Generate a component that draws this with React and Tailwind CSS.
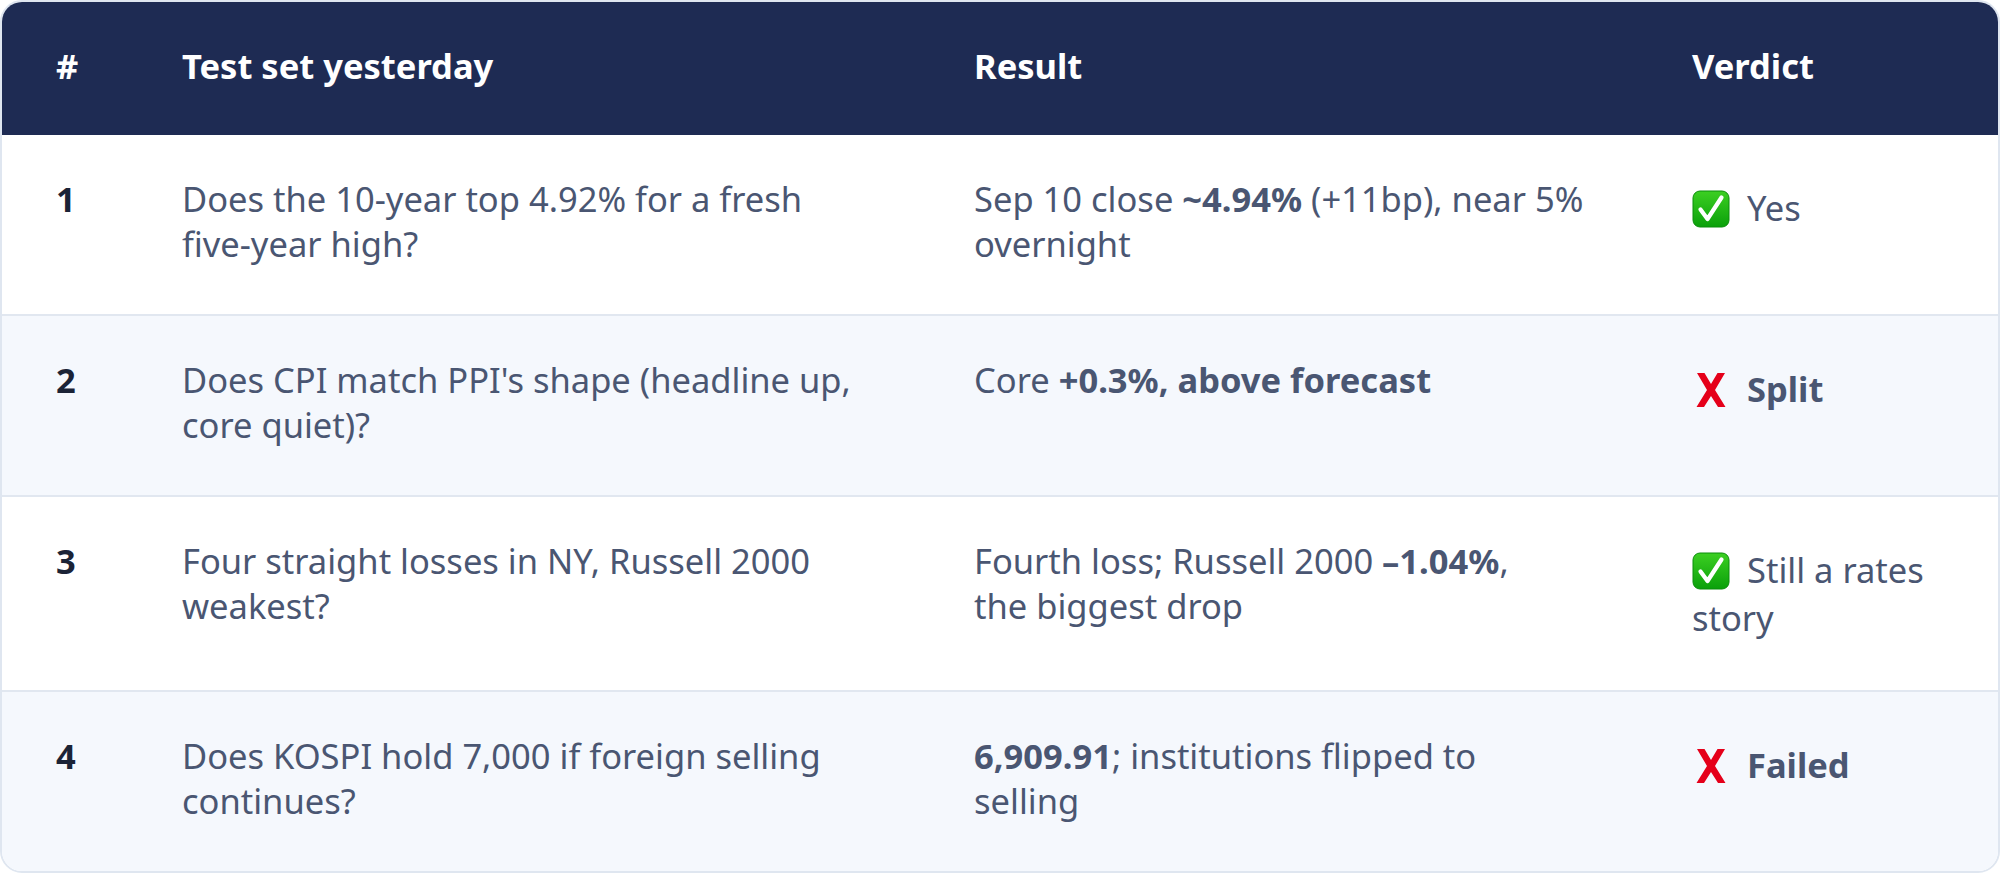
import React from "react";

function CheckMark() {
  return (
    <svg className="inline-block align-[-7px] mr-[17px]" width="38" height="38" viewBox="0 0 38 38">
      <defs>
        <linearGradient id="chk" x1="0" y1="0" x2="0" y2="1">
          <stop offset="0" stopColor="#3ccf22" />
          <stop offset="1" stopColor="#0aa00a" />
        </linearGradient>
      </defs>
      <rect x="1" y="1" width="36" height="36" rx="7" fill="url(#chk)" stroke="#0b8e0b" strokeWidth="1" />
      <path d="M8.5 19.5 L15.5 29 L29.5 7.5" fill="none" stroke="#fff" strokeWidth="4.2" strokeLinecap="round" strokeLinejoin="round" />
    </svg>
  );
}

function CrossMark() {
  return (
    <svg className="inline-block align-[-7px] mr-[17px]" width="38" height="38" viewBox="0 0 38 38">
      <path d="M5 2 L12.5 2 L19 13 L25.5 2 L33 2 L23 19 L33.5 36 L26 36 L19 25 L12 36 L4.5 36 L15 19 Z" fill="#e5001a" />
    </svg>
  );
}

const rows = [
  {
    n: "1",
    test: <>Does the 10-year top 4.92% for a fresh<br />five-year high?</>,
    result: <>Sep 10 close <b className="font-bold">~4.94%</b> (+11bp), near 5%<br />overnight</>,
    ok: true,
    verdict: <>Yes</>,
  },
  {
    n: "2",
    test: <>Does CPI match PPI's shape (headline up,<br />core quiet)?</>,
    result: <>Core <b className="font-bold">+0.3%, above forecast</b></>,
    ok: false,
    verdict: <b className="font-bold">Split</b>,
  },
  {
    n: "3",
    test: <>Four straight losses in NY, Russell 2000<br />weakest?</>,
    result: <>Fourth loss; Russell 2000 <b className="font-bold">–1.04%</b>,<br />the biggest drop</>,
    ok: true,
    verdict: <>Still a rates<br />story</>,
  },
  {
    n: "4",
    test: <>Does KOSPI hold 7,000 if foreign selling<br />continues?</>,
    result: <><b className="font-bold">6,909.91</b>; institutions flipped to<br />selling</>,
    ok: false,
    verdict: <b className="font-bold">Failed</b>,
  },
];

export default function App() {
  return (
    <div className="w-[2000px] bg-white font-['Noto_Sans',sans-serif] text-[34.5px] leading-[45px]">
      <div className="border-2 border-[#dfe6f0] rounded-[22px] overflow-hidden">
        <div className="grid grid-cols-[153px_792px_718px_1fr] bg-[#1e2b53] text-white font-bold">
          <div className="pl-[54px] pt-[41px] pb-[47px]">#</div>
          <div className="pl-[27px] pt-[41px] pb-[47px]">Test set yesterday</div>
          <div className="pl-[27px] pt-[41px] pb-[47px]">Result</div>
          <div className="pl-[27px] pt-[41px] pb-[47px]">Verdict</div>
        </div>
        {rows.map((r, i) => (
          <div
            key={r.n}
            className={
              "grid grid-cols-[153px_792px_718px_1fr] text-[#4a5672] " +
              (i % 2 === 1 ? "bg-[#f5f8fd] " : "bg-white ") +
              (i > 0 ? "border-t-2 border-[#e1e7f0]" : "")
            }
          >
            <div className="pl-[54px] pt-[41px] pb-[48px] font-bold text-[#1b2336]">{r.n}</div>
            <div className="pl-[27px] pt-[41px] pb-[48px]">{r.test}</div>
            <div className="pl-[27px] pt-[41px] pb-[48px]">{r.result}</div>
            <div className="pl-[27px] pt-[49px] pb-[48px] leading-[48px]">
              {r.ok ? <CheckMark /> : <CrossMark />}
              {r.verdict}
            </div>
          </div>
        ))}
      </div>
    </div>
  );
}
